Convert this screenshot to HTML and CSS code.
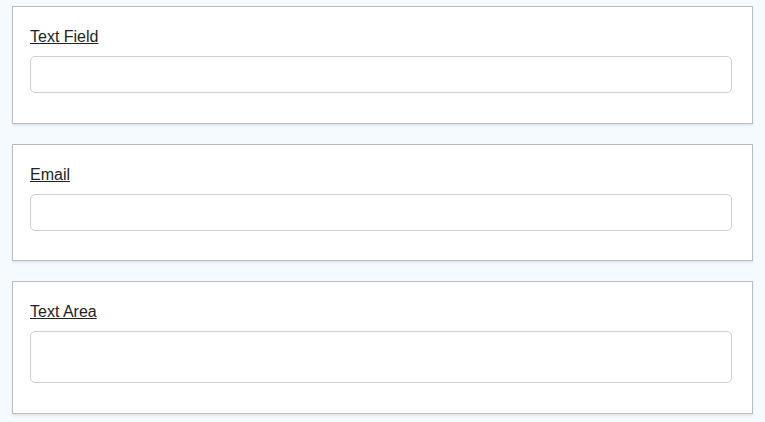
FILE: index.html
```html
<!DOCTYPE html>
<html lang="en">
<head>
  <meta charset="UTF-8" />
  <meta name="viewport" content="width=device-width, initial-scale=1" />
  <title>Form Fields</title>
  <link rel="stylesheet" href="styles.css">
</head>
<body>

  <div class="field-card">
    <label class="field-label" for="textField">Text Field</label>
    <input class="field-input" type="text" id="textField">
  </div>

  <div class="field-card">
    <label class="field-label" for="emailField">Email</label>
    <input class="field-input" type="email" id="emailField">
  </div>

  <div class="field-card">
    <label class="field-label" for="areaField">Text Area</label>
    <textarea class="field-input field-area" id="areaField"></textarea>
  </div>

</body>
</html>
```

FILE: styles.css
```css
body {
  font-family: "Liberation Sans", Arial, sans-serif;
  margin: 0;
  padding: 6px 12px;
  background: #f4faff;
  display: flex;
  flex-direction: column;
  gap: 20px;
}

.field-card {
  background: #fff;
  border: 1px solid #bcbcbc;
  box-shadow: 0 2px 2px rgba(0, 0, 0, 0.08);
  padding: 21px 20px 29.5px 17px;
}

.field-label {
  display: block;
  font-size: 16px;
  line-height: 18px;
  color: #222;
  text-decoration: underline;
  margin-bottom: 10px;
}

.field-input {
  display: block;
  box-sizing: border-box;
  width: 100%;
  height: 37px;
  margin: 0;
  border: 1px solid #cfcfcf;
  border-radius: 5px;
  background: #fff;
  font: inherit;
  resize: none;
}

.field-area {
  height: 52px;
}
```
